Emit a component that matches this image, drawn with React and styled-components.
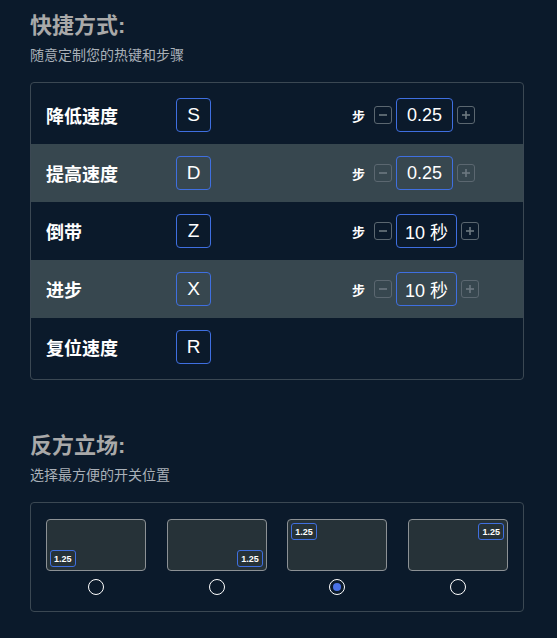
import styled, { createGlobalStyle } from 'styled-components'

const GlobalStyle = createGlobalStyle`
  html, body {
    margin: 0;
    padding: 0;
    background: #0b1a2b;
  }
  body {
    font-family: "Liberation Sans", "Noto Sans CJK SC", sans-serif;
    color: #fff;
  }
`

const shortcuts = [
  { name: '降低速度', key: 'S', value: '0.25' },
  { name: '提高速度', key: 'D', value: '0.25' },
  { name: '倒带', key: 'Z', value: '10 秒' },
  { name: '进步', key: 'X', value: '10 秒' },
  { name: '复位速度', key: 'R' },
]

const positions = [
  { v: 'bottom', h: 'left' },
  { v: 'bottom', h: 'right' },
  { v: 'top', h: 'left', checked: true },
  { v: 'top', h: 'right' },
]

const MinusIcon = () => (
  <svg width="10" height="10" viewBox="0 0 10 10">
    <line x1="1" y1="5" x2="9" y2="5" stroke="currentColor" strokeWidth="1.6" />
  </svg>
)

const PlusIcon = () => (
  <svg width="10" height="10" viewBox="0 0 10 10">
    <line x1="1" y1="5" x2="9" y2="5" stroke="currentColor" strokeWidth="1.6" />
    <line x1="5" y1="1" x2="5" y2="9" stroke="currentColor" strokeWidth="1.6" />
  </svg>
)

export default function App() {
  return (
    <Page>
      <GlobalStyle />
      <Section>
        <Title>快捷方式:</Title>
        <Subtitle>随意定制您的热键和步骤</Subtitle>
        <Panel>
          {shortcuts.map((s, i) => (
            <Row key={s.key} $alt={i % 2 === 1}>
              <Label>{s.name}</Label>
              <KeyBox>{s.key}</KeyBox>
              {s.value && (
                <Stepper>
                  <StepText>步</StepText>
                  <StepButton><MinusIcon /></StepButton>
                  <ValueBox>{s.value}</ValueBox>
                  <StepButton><PlusIcon /></StepButton>
                </Stepper>
              )}
            </Row>
          ))}
        </Panel>
      </Section>

      <Section $second>
        <Title>反方立场:</Title>
        <Subtitle>选择最方便的开关位置</Subtitle>
        <OptionsPanel>
          {positions.map((p, i) => (
            <Option key={i}>
              <Preview $v={p.v} $h={p.h}>
                <Badge>1.25</Badge>
              </Preview>
              <Radio $checked={p.checked} />
            </Option>
          ))}
        </OptionsPanel>
      </Section>
    </Page>
  )
}

const Page = styled.div`
  padding: 0 33px 0 30px;
`

const Section = styled.section`
  padding-top: ${(p) => (p.$second ? '52px' : '12px')};
`

const Title = styled.h2`
  margin: 0;
  font-size: 22px;
  line-height: 28px;
  font-weight: 700;
  color: #a9a9a9;
`

const Subtitle = styled.p`
  margin: 6px 0 18px;
  font-size: 14px;
  line-height: 18px;
  color: #a9b0b8;
`

const Panel = styled.div`
  border: 1px solid #3b4853;
  border-radius: 4px;
  padding: 3px 0;
`

const Row = styled.div`
  display: grid;
  grid-template-columns: 130px 176px auto;
  align-items: center;
  height: 58px;
  padding-left: 15px;
  background: ${(p) => (p.$alt ? '#37474f' : 'transparent')};
`

const Label = styled.div`
  font-size: 18px;
  font-weight: 700;
  color: #fff;
`

const KeyBox = styled.div`
  width: 35px;
  height: 34px;
  box-sizing: border-box;
  border: 1px solid #3f6fe0;
  border-radius: 4px;
  display: flex;
  align-items: center;
  justify-content: center;
  font-size: 19px;
  color: #fff;
`

const Stepper = styled.div`
  display: flex;
  align-items: center;
  gap: 4px;
`

const StepText = styled.span`
  font-size: 13px;
  font-weight: 700;
  margin-right: 5px;
`

const StepButton = styled.div`
  width: 18px;
  height: 18px;
  box-sizing: border-box;
  border: 1px solid #5b6770;
  border-radius: 3px;
  display: flex;
  align-items: center;
  justify-content: center;
  color: #6c7880;
`

const ValueBox = styled.div`
  height: 34px;
  box-sizing: border-box;
  padding: 0 8px;
  min-width: 57px;
  border: 1px solid #3f6fe0;
  border-radius: 4px;
  display: flex;
  align-items: center;
  justify-content: center;
  font-size: 18px;
  color: #fff;
`

const OptionsPanel = styled.div`
  border: 1px solid #3b4853;
  border-radius: 4px;
  padding: 16px 15px 16px;
  display: flex;
  justify-content: space-between;
`

const Option = styled.div`
  display: flex;
  flex-direction: column;
  align-items: center;
  gap: 8px;
`

const Preview = styled.div`
  width: 100px;
  height: 52px;
  box-sizing: border-box;
  border: 1px solid #8c9195;
  border-radius: 4px;
  background: #263238;
  padding: 3px;
  display: flex;
  flex-direction: column;
  justify-content: ${(p) => (p.$v === 'top' ? 'flex-start' : 'flex-end')};
  align-items: ${(p) => (p.$h === 'left' ? 'flex-start' : 'flex-end')};
`

const Badge = styled.div`
  height: 17px;
  box-sizing: border-box;
  padding: 0 3px;
  border: 1px solid #3f6fe0;
  border-radius: 3px;
  display: flex;
  align-items: center;
  font-size: 9px;
  font-weight: 700;
  color: #fff;
`

const Radio = styled.div`
  width: 16px;
  height: 16px;
  box-sizing: border-box;
  border: 1.5px solid #fff;
  border-radius: 50%;
  display: flex;
  align-items: center;
  justify-content: center;

  &::after {
    content: '';
    display: ${(p) => (p.$checked ? 'block' : 'none')};
    width: 8px;
    height: 8px;
    border-radius: 50%;
    background: #4a72e8;
  }
`
